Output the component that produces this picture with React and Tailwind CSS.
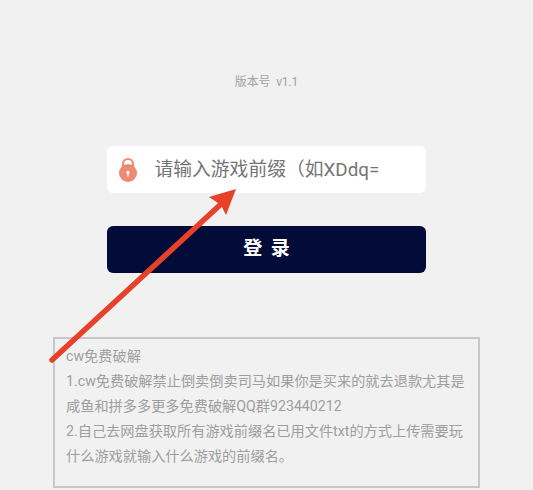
import React from 'react';

const App = () => {
  return (
    <div className="relative w-full h-[490px] overflow-hidden bg-[#f1f1f1] flex flex-col items-center font-['Roboto','Noto_Sans_CJK_SC',sans-serif]">
      {/* Version */}
      <div className="mt-[74px] h-4 text-[12px] leading-4 text-[#a3a3a3] tracking-[-0.01em]">版本号&nbsp;&nbsp;v1.1</div>

      {/* Input */}
      <div className="mt-[56px] w-[319px] h-[47px] bg-white rounded-md flex items-center">
        <svg className="ml-[12px]" width="18" height="25" viewBox="0 0 18 25">
          <path d="M4 12V7a5 5 0 0 1 10 0v5" fill="none" stroke="#ee8a72" strokeWidth="2.2" />
          <circle cx="9" cy="16" r="9" fill="#ee8a72" />
          <circle cx="9" cy="15.5" r="1.7" fill="#ffffff" />
          <rect x="8.4" y="15.5" width="1.2" height="4" fill="#ffffff" />
        </svg>
        <span className="ml-[17.5px] mt-[1px] text-[18.8px] text-[#757575] whitespace-nowrap">请输入游戏前缀（如XDdq=</span>
      </div>

      {/* Login button */}
      <button className="mt-[33px] w-[319px] h-[47px] bg-[#030c38] rounded-md text-white text-[19px] font-bold tracking-[2px] pl-[2px]">登 录</button>

      {/* Notice */}
      <div className="mt-[64px] w-[427px] h-[151px] border-2 border-[#c8c8c8] pl-[11px] pr-[10px] pt-[5px] text-[14.2px] leading-[25px] text-[#9e9e9e]">
        <p>cw免费破解</p>
        <p>1.cw免费破解禁止倒卖倒卖司马如果你是买来的就去退款尤其是咸鱼和拼多多更多免费破解QQ群923440212</p>
        <p>2.自己去网盘获取所有游戏前缀名已用文件txt的方式上传需要玩什么游戏就输入什么游戏的前缀名。</p>
      </div>

      {/* Arrow annotation */}
      <svg className="absolute left-0 top-0 pointer-events-none" width="533" height="490" viewBox="0 0 533 490">
        <path d="M52 360 L220 205" fill="none" stroke="#e8412a" strokeWidth="5.5" strokeLinecap="round" />
        <path d="M236 189 L226 215 L221 205 L209 197 Z" fill="#e8412a" />
      </svg>
    </div>
  );
};

export default App;
